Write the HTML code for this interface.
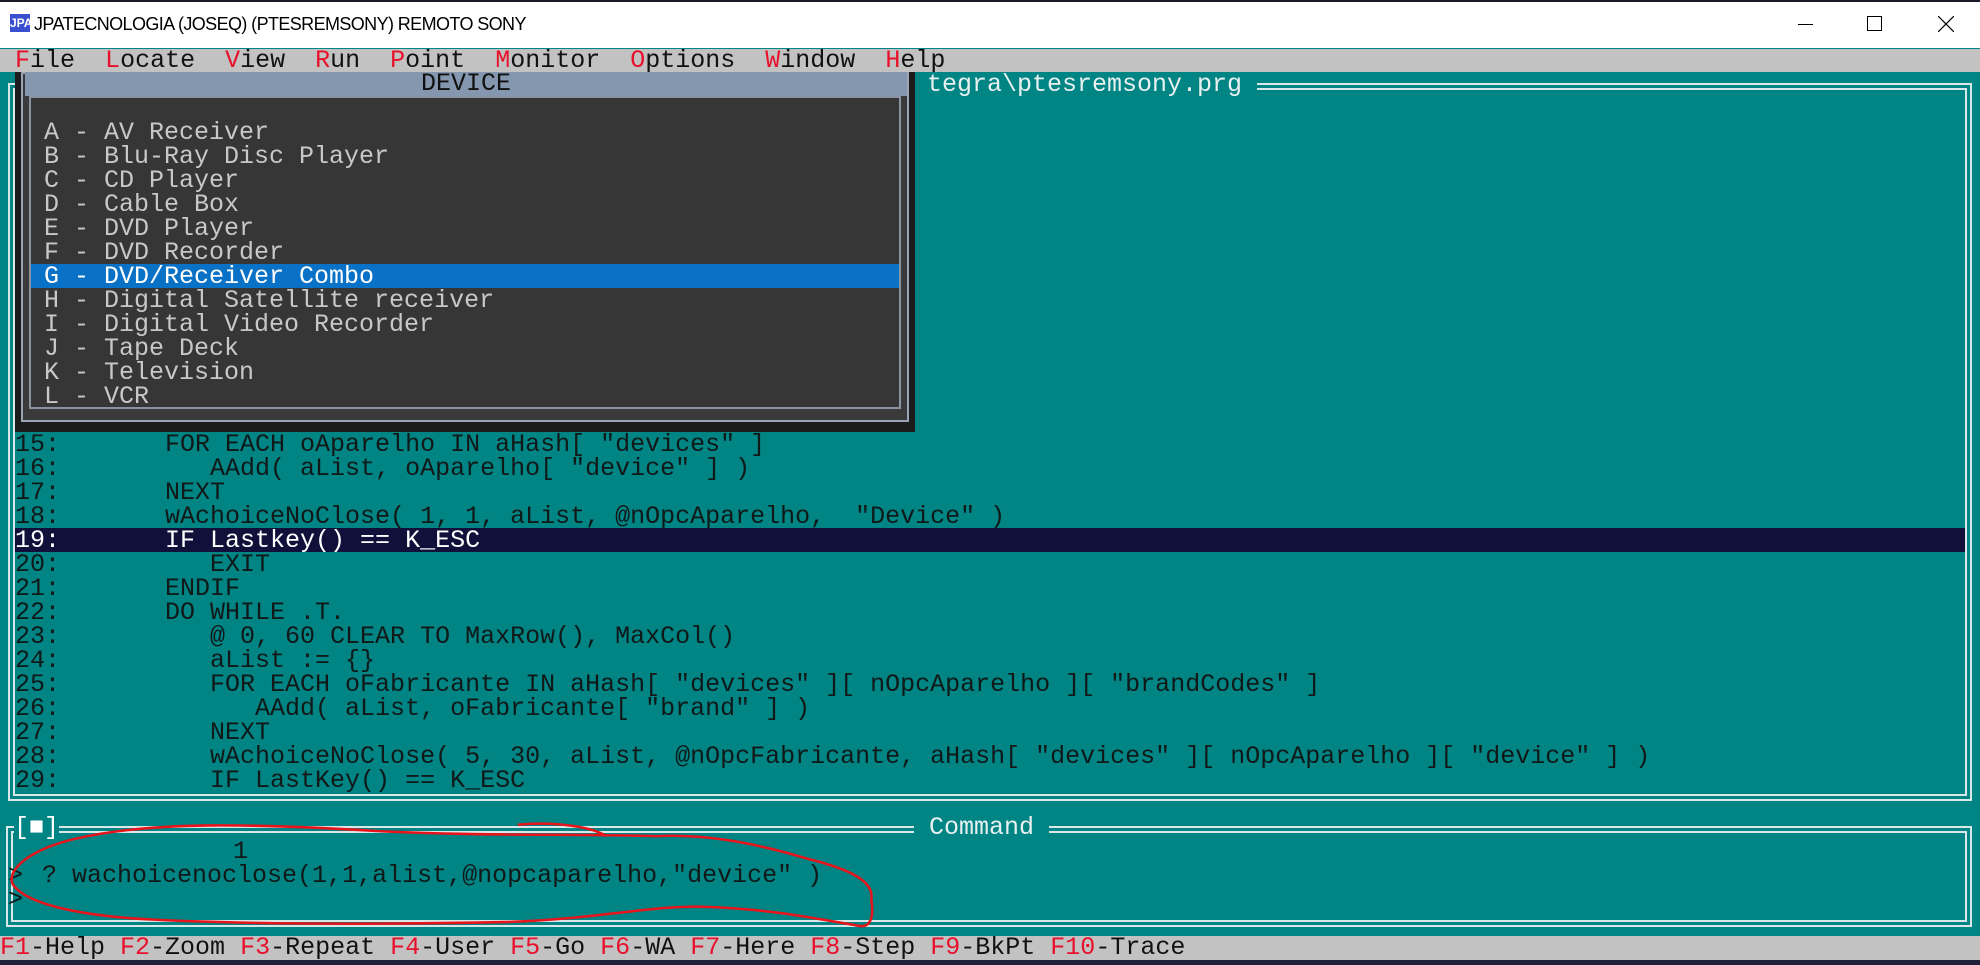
<!DOCTYPE html>
<html><head><meta charset="utf-8"><style>
*{margin:0;padding:0;box-sizing:border-box}
body{width:1980px;height:965px;overflow:hidden;background:#008484;position:relative;font-family:"Liberation Mono",monospace;font-size:25px;}
.a{position:absolute;white-space:pre;line-height:24px}
.r{color:#e8102a}
</style></head><body>
<!-- title bar -->
<div class="a" style="left:0;top:0;width:1980px;height:48px;background:#fff;border-top:2px solid #1a1a2a"></div>
<div class="a" style="left:10px;top:14px;width:20px;height:18px;background:#3a4fd0;color:#fff;font:bold 12px 'Liberation Sans',sans-serif;line-height:18px;text-align:center">JPA</div>
<div class="a" style="left:34px;top:12px;font:18px 'Liberation Sans',sans-serif;letter-spacing:-0.6px;color:#000;line-height:24px">JPATECNOLOGIA (JOSEQ) (PTESREMSONY) REMOTO SONY</div>
<div class="a" style="left:1798px;top:24px;width:15px;height:1px;background:#000"></div>
<div class="a" style="left:1867px;top:16px;width:15px;height:15px;border:1px solid #000"></div>
<svg class="a" style="left:1938px;top:16px" width="16" height="16"><path d="M0 0L16 16M16 0L0 16" stroke="#000" stroke-width="1.2"/></svg>
<!-- menu -->
<div class="a" style="left:0;top:49px;width:1980px;height:23px;background:#c2c2c2;color:#111"> <span class="r">F</span>ile  <span class="r">L</span>ocate  <span class="r">V</span>iew  <span class="r">R</span>un  <span class="r">P</span>oint  <span class="r">M</span>onitor  <span class="r">O</span>ptions  <span class="r">W</span>indow  <span class="r">H</span>elp</div>
<!-- main frame -->
<div class="a" style="left:8px;top:83px;width:1964px;height:718px;border:2px solid #d8e8e8"></div>
<div class="a" style="left:13px;top:88px;width:1954px;height:708px;border:2px solid #d8e8e8"></div>
<div class="a" style="left:912px;top:73px;background:#008484;color:#e8f0f0"> tegra\ptesremsony.prg </div>
<!-- code -->
<div class="a" style="left:15px;top:528px;width:1950px;height:24px;background:#10103a"></div>
<div class="a" style="left:15px;top:433px;color:#101818">15:       FOR EACH oAparelho IN aHash[ "devices" ]
16:          AAdd( aList, oAparelho[ "device" ] )
17:       NEXT
18:       wAchoiceNoClose( 1, 1, aList, @nOpcAparelho,  "Device" )
<span style="color:#fff">19:       IF Lastkey() == K_ESC</span>
20:          EXIT
21:       ENDIF
22:       DO WHILE .T.
23:          @ 0, 60 CLEAR TO MaxRow(), MaxCol()
24:          aList := {}
25:          FOR EACH oFabricante IN aHash[ "devices" ][ nOpcAparelho ][ "brandCodes" ]
26:             AAdd( aList, oFabricante[ "brand" ] )
27:          NEXT
28:          wAchoiceNoClose( 5, 30, aList, @nOpcFabricante, aHash[ "devices" ][ nOpcAparelho ][ "device" ] )
29:          IF LastKey() == K_ESC</div>
<!-- popup -->
<div class="a" style="left:15px;top:72px;width:900px;height:360px;background:#1c1c1c"></div>
<div class="a" style="left:21px;top:72px;width:888px;height:350px;background:#3a3a3a;border:2px solid #9aa4b4"></div>
<div class="a" style="left:25px;top:72px;width:882px;height:24px;background:#8497ae;color:#111;text-align:center">DEVICE</div>
<div class="a" style="left:29px;top:96px;width:872px;height:313px;background:#363636;border:2px solid #8a93a2"></div>
<div class="a" style="left:31px;top:264px;width:868px;height:24px;background:#0a72c6"></div>
<div class="a" style="left:44px;top:121px;color:#c8c8c8">A - AV Receiver
B - Blu-Ray Disc Player
C - CD Player
D - Cable Box
E - DVD Player
F - DVD Recorder
<span style="color:#fff">G - DVD/Receiver Combo</span>
H - Digital Satellite receiver
I - Digital Video Recorder
J - Tape Deck
K - Television
L - VCR</div>
<!-- command frame -->
<div class="a" style="left:6px;top:826px;width:1966px;height:101px;border:2px solid #d8e8e8"></div>
<div class="a" style="left:11px;top:831px;width:1956px;height:91px;border:2px solid #d8e8e8"></div>
<div class="a" style="left:14px;top:816px;background:#008484;color:#fff">[■]</div>
<div class="a" style="left:914px;top:816px;background:#008484;color:#e8f0f0"> Command </div>
<div class="a" style="left:8px;top:840px;color:#101818">               1
&gt; <span style="margin-left:4px">? wachoicenoclose(1,1,alist,@nopcaparelho,"device" )</span>
&gt;</div>
<!-- fkeys -->
<div class="a" style="left:0;top:936px;width:1980px;height:24px;background:#c2c2c2;color:#111"><span class="r">F1</span>-Help <span class="r">F2</span>-Zoom <span class="r">F3</span>-Repeat <span class="r">F4</span>-User <span class="r">F5</span>-Go <span class="r">F6</span>-WA <span class="r">F7</span>-Here <span class="r">F8</span>-Step <span class="r">F9</span>-BkPt <span class="r">F10</span>-Trace</div>
<div class="a" style="left:0;top:960px;width:1980px;height:5px;background:#20203a"></div>
<!-- red scribble -->
<svg class="a" style="left:0;top:0" width="1980" height="965" viewBox="0 0 1568 764" preserveAspectRatio="none">
<path d="M60 664 C120 650 200 652 300 658 C380 662 450 660 520 662 C560 660 600 668 640 680 C680 690 692 700 690 712 C692 725 690 735 680 733 C640 726 610 720 560 718 C520 716 470 728 400 730 C300 732 200 732 120 728 C60 725 20 715 10 700 C5 688 25 672 60 664 Z M410 653 C440 650 470 655 480 662" fill="none" stroke="#e8141c" stroke-width="2"/>
</svg>
</body></html>
